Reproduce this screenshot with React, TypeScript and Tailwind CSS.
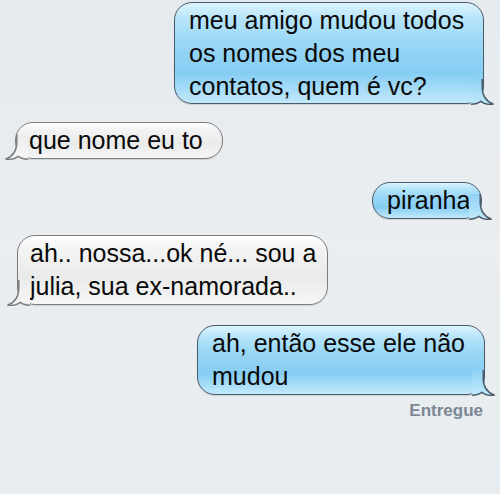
import type { ReactNode } from "react";

type Side = "left" | "right";

function Tail({ side }: { side: Side }) {
  const blue = side === "right";
  const id = blue ? "tail-blue" : "tail-gray";
  return (
    <svg
      width="24"
      height="26"
      viewBox="0 0 24 26"
      className={
        side === "right"
          ? "absolute right-[-12px] bottom-[-1.5px]"
          : "absolute left-[-12px] bottom-[-1.5px] -scale-x-100"
      }
    >
      <defs>
        <linearGradient id={id} x1="0" y1="0" x2="0" y2="1">
          <stop offset="0" stopColor={blue ? "#8fd2f5" : "#ececec"} />
          <stop offset="1" stopColor={blue ? "#c2e9fb" : "#f6f6f6"} />
        </linearGradient>
      </defs>
      <path
        d="M0 25.2 L0 0 L11.2 0 L11.2 8 C11.2 17 15 22.5 22.5 25.2 C17 25.9 13 24.8 9.8 22.3 C7 24.4 3.5 25.2 0 25.2 Z"
        fill={`url(#${id})`}
      />
      <path
        d="M11.2 0 L11.2 8 C11.2 17 15 22.5 22.5 25.2 C17 25.9 13 24.8 9.8 22.3 C7 24.4 3.5 25.2 0 25.2"
        fill="none"
        stroke={blue ? "#4a5b69" : "#7a7c7f"}
        strokeWidth="1.5"
      />
    </svg>
  );
}

function Bubble({
  side,
  className,
  children,
}: {
  side: Side;
  className: string;
  children: ReactNode;
}) {
  const look =
    side === "right"
      ? "border-[#4a5b69] bg-[linear-gradient(180deg,#dcf3fd_0%,#b6e4f9_16%,#9ad7f6_38%,#86cdf3_70%,#c2e9fb_100%)] shadow-[0_1px_1px_rgba(0,0,0,0.12)]"
      : "border-[#7a7c7f] bg-[linear-gradient(180deg,#ffffff_0%,#f3f3f3_20%,#eaeaea_60%,#f6f6f6_100%)] shadow-[0_1px_1px_rgba(0,0,0,0.12)]";
  return (
    <div
      className={`relative whitespace-nowrap rounded-[18px] border-[1.5px] py-[1px] ${look} ${className}`}
    >
      {children}
      <Tail side={side} />
    </div>
  );
}

export default function App() {
  return (
    <div
      className="w-[500px] h-[494px] overflow-hidden flex flex-col bg-[linear-gradient(180deg,#e5eaee_0%,#eaeef1_50%,#e6ecef_100%)] text-[25px] leading-[33px] text-[#0a0a0a]"
      style={{ fontFamily: '"Liberation Sans", Arial, sans-serif' }}
    >
      <Bubble side="right" className="self-end mt-[2px] mr-[16px] w-[310px] px-[14px] pt-[1px] pb-0">
        meu amigo mudou todos
        <br />
        os nomes dos meu
        <br />
        contatos, quem é vc?
      </Bubble>

      <Bubble side="left" className="self-start mt-[18px] ml-[15px] w-[208px] px-[13px]">
        que nome eu to
      </Bubble>

      <Bubble side="right" className="self-end mt-[23px] mr-[18px] w-[110px] px-[14px]">
        piranha
      </Bubble>

      <Bubble side="left" className="self-start mt-[16px] ml-[17px] w-[311px] px-[12px]">
        ah.. nossa...ok né... sou a
        <br />
        julia, sua ex-namorada..
      </Bubble>

      <Bubble side="right" className="self-end mt-[20px] mr-[15px] w-[288px] px-[14px]">
        ah, então esse ele não
        <br />
        mudou
      </Bubble>

      <div className="self-end mt-[6px] mr-[17px] text-[17px] leading-[20px] font-bold text-[#7b8793]">
        Entregue
      </div>
    </div>
  );
}
